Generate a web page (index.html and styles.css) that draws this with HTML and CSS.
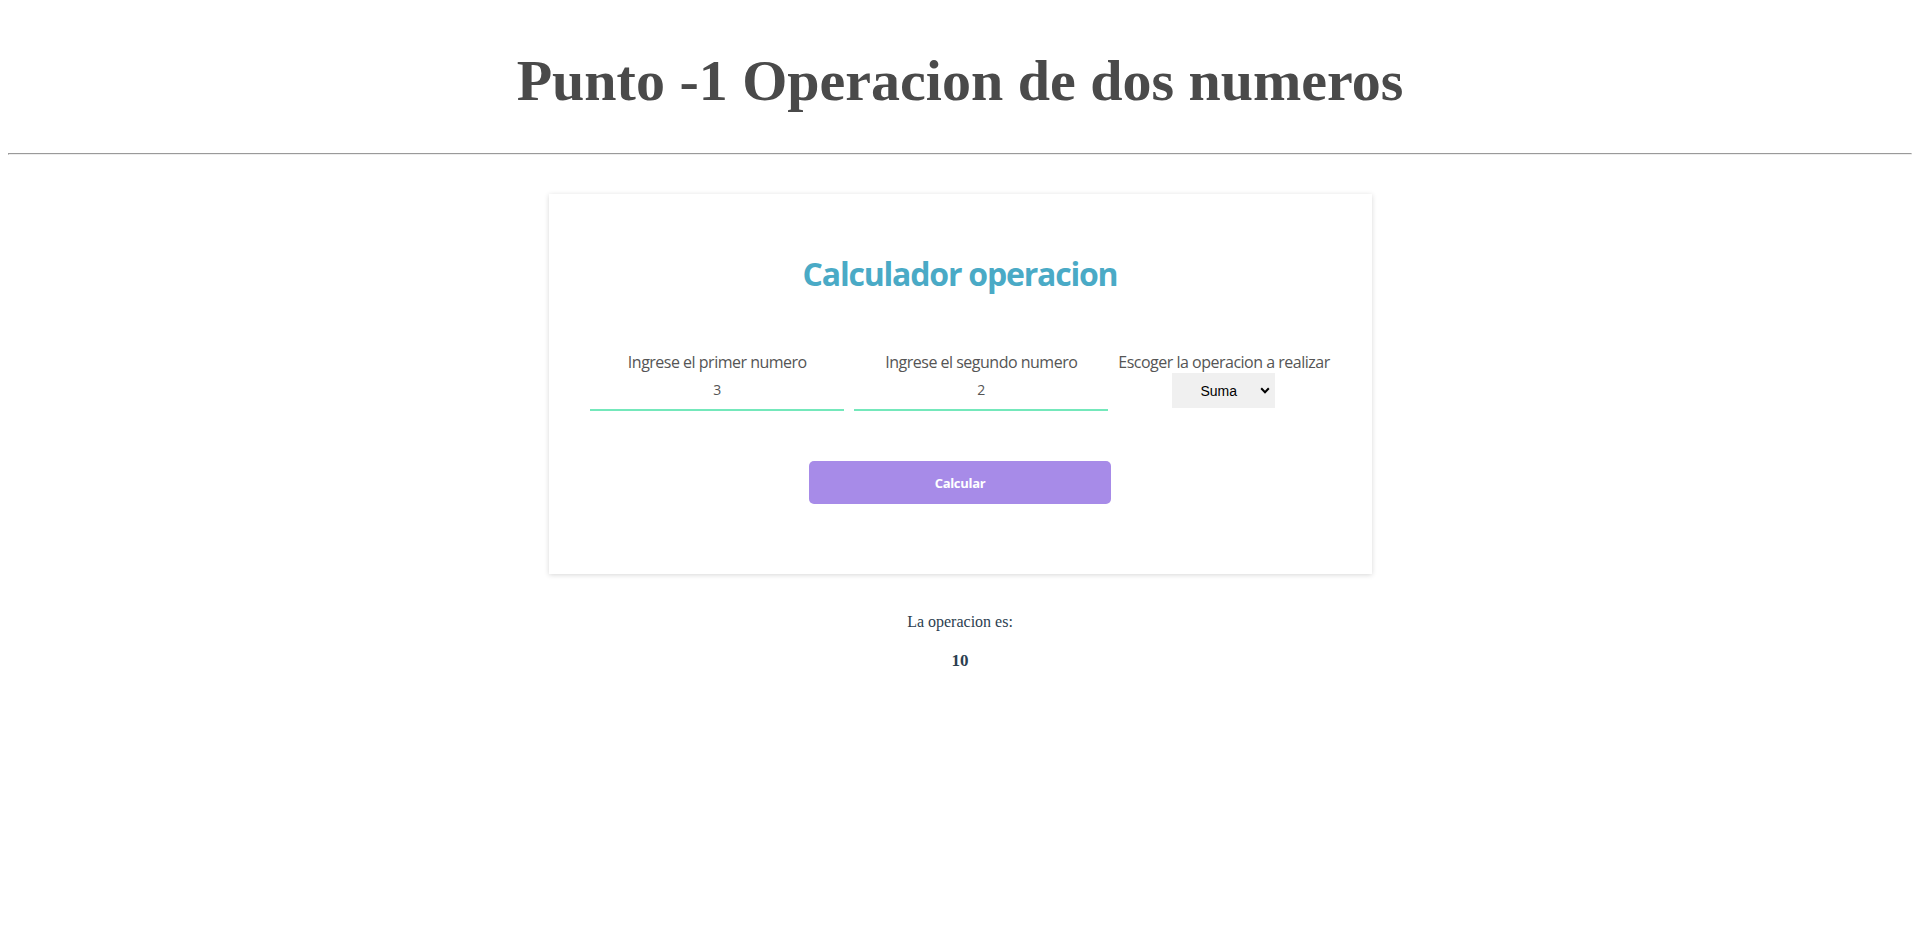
FILE: index.html
```html
<!DOCTYPE html>
<html lang="es">
<head>
<meta charset="utf-8">
<title>Punto -1 Operacion de dos numeros</title>
<link rel="stylesheet" href="styles.css">
</head>
<body>
  <h1 class="page-title">Punto -1 Operacion de dos numeros</h1>
  <hr class="divider">
  <div class="card">
    <h2 class="card-title">Calculador operacion</h2>
    <div class="fields">
      <div class="field">
        <label class="field-label" for="n1">Ingrese el primer numero</label>
        <input class="num-input" id="n1" type="text" value="3">
      </div>
      <div class="field">
        <label class="field-label" for="n2">Ingrese el segundo numero</label>
        <input class="num-input" id="n2" type="text" value="2">
      </div>
      <div class="field">
        <label class="field-label" for="op">Escoger la operacion a realizar</label>
        <span class="select-wrap">
          <select class="op-select" id="op">
            <option>Suma</option>
            <option>Resta</option>
            <option>Multiplicacion</option>
            <option>Division</option>
          </select>
          <svg class="chevron" width="10" height="7" viewBox="0 0 10 7"><path d="M1.2 1.3 L5 5.2 L8.8 1.3" fill="none" stroke="#000" stroke-width="2"/></svg>
        </span>
      </div>
    </div>
    <button class="calc-btn" type="button">Calcular</button>
  </div>
  <p class="result-label">La operacion es:</p>
  <p class="result-value">10</p>
</body>
</html>
```

FILE: styles.css
```css
body {
  margin: 0;
  padding: 8px;
  font-family: "Liberation Serif", "Times New Roman", serif;
  background: #fff;
}

.page-title {
  margin: 40px 0 39px;
  font-size: 58px;
  line-height: 66px;
  font-weight: bold;
  text-align: center;
  color: #4a4a4a;
}

.divider {
  margin: 0;
}

.card {
  width: 823px;
  box-sizing: border-box;
  margin: 39px auto 0;
  padding: 58px 32px 70px;
  background: #fff;
  box-shadow: 0 1px 5px rgba(0, 0, 0, 0.16);
  display: flex;
  flex-direction: column;
  align-items: center;
  font-family: "Open Sans", "Noto Sans", sans-serif;
}

.card-title {
  margin: 0;
  font-size: 32px;
  line-height: 43px;
  font-weight: 700;
  color: #4aaac6;
  letter-spacing: -1.2px;
}

.fields {
  margin-top: 57px;
  display: flex;
  justify-content: center;
  gap: 10px;
}

.field {
  display: flex;
  flex-direction: column;
  align-items: center;
}

.field-label {
  font-size: 16px;
  line-height: 21px;
  color: #555;
  letter-spacing: -0.5px;
  white-space: nowrap;
}

.num-input {
  width: 254px;
  height: 38px;
  box-sizing: border-box;
  border: none;
  border-bottom: 2px solid #74e8bb;
  background: transparent;
  text-align: center;
  font-family: "Open Sans", sans-serif;
  font-size: 14px;
  color: #555;
  outline: none;
  padding: 0 0 3px;
}

.select-wrap {
  position: relative;
  display: inline-block;
}

.op-select {
  appearance: none;
  -webkit-appearance: none;
  width: 103px;
  height: 35px;
  border: none;
  border-radius: 0;
  background: #f0f0f0;
  font-family: "Liberation Sans", Arial, sans-serif;
  font-size: 14px;
  color: #000;
  padding: 0 0 0 28px;
  outline: none;
}

.chevron {
  position: absolute;
  right: 5px;
  top: 14px;
  pointer-events: none;
}

.calc-btn {
  margin-top: 50px;
  width: 302px;
  height: 43px;
  border: none;
  border-radius: 5px;
  background: #a78be8;
  color: #fff;
  font-family: "Open Sans", sans-serif;
  font-weight: 700;
  font-size: 13px;
  letter-spacing: -0.3px;
  cursor: pointer;
}

.result-label {
  margin: 39px 0 0;
  text-align: center;
  font-size: 16px;
  color: #2c3e50;
}

.result-value {
  margin: 20px 0 0;
  text-align: center;
  font-size: 17px;
  font-weight: bold;
  color: #2c3e50;
}
```
